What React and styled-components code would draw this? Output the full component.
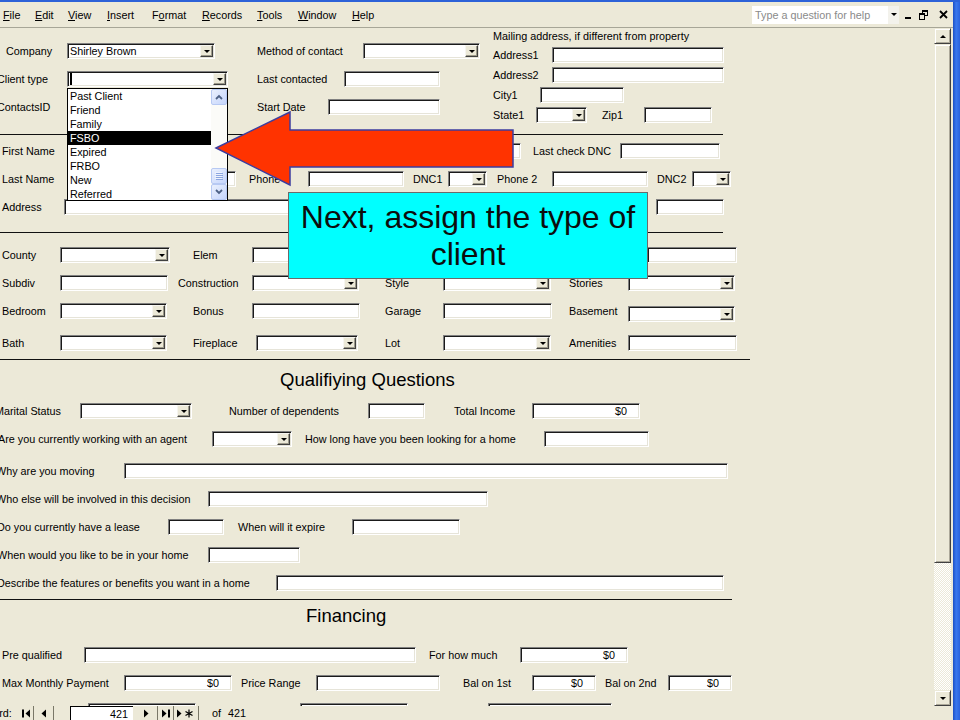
import React from 'react'
import styled, { createGlobalStyle } from 'styled-components'

const BEIGE = '#ece9d8'

const GlobalStyle = createGlobalStyle`
  * { box-sizing: border-box; }
  html, body { margin: 0; padding: 0; background: ${BEIGE}; }
  body {
    font-family: 'Liberation Sans', Arial, sans-serif;
    font-size: 10.8px;
    color: #000;
  }
`

const Window = styled.div`
  position: relative;
  width: 960px;
  height: 720px;
  overflow: hidden;
  display: flex;
  flex-direction: column;
  background: ${BEIGE};
`

const TopEdge = styled.div`
  flex: none;
  height: 2px;
  background: #2d62d8;
`

const Body = styled.div`
  flex: 1;
  display: flex;
  min-height: 0;
`

const Inner = styled.div`
  flex: 1;
  display: flex;
  flex-direction: column;
  min-width: 0;
`

const RightFrame = styled.div`
  flex: none;
  width: 7px;
  background: linear-gradient(90deg, #1b4fc4 0, #3a78ee 45%, #2a62dc 100%);
`

/* ---------- menu bar ---------- */

const MenuBar = styled.div`
  flex: none;
  height: 26px;
  display: flex;
  align-items: center;
  white-space: nowrap;
  border-bottom: 1px solid #a7a697;
`

const MenuItem = styled.span`
  flex: none;
  width: ${(p) => (p.$w ? `${p.$w}px` : 'auto')};
  margin-left: ${(p) => p.$ml || 0}px;
`

const HelpBox = styled.div`
  flex: none;
  margin-left: auto;
  width: 147px;
  height: 18px;
  display: flex;
  align-items: center;
  background: #fff;
`

const HelpText = styled.span`
  flex: 1;
  padding-left: 3px;
  color: #8a8a8a;
`

const HelpArrow = styled.span`
  flex: none;
  width: 11px;
  height: 100%;
  display: flex;
  align-items: center;
  justify-content: center;
  background: #f3f2ec;
`

const Tri = styled.span`
  width: 0;
  height: 0;
  border-left: 3px solid transparent;
  border-right: 3px solid transparent;
  ${(p) => (p.$up ? 'border-bottom: 3px solid #000;' : 'border-top: 3px solid #000;')}
`

const Controls = styled.div`
  flex: none;
  width: 54px;
  height: 25px;
  display: flex;
  align-items: center;
`

const CtlIcon = styled.svg`
  flex: none;
  margin-left: ${(p) => p.$ml}px;
`

/* ---------- form ---------- */

const Content = styled.div`
  flex: 1;
  display: flex;
  min-height: 0;
`

const Form = styled.div`
  flex: 1;
  min-width: 0;
  overflow: hidden;
`

const TopSection = styled.div`
  display: flex;
  height: 106px;
`

const TopLeft = styled.div`
  flex: none;
  width: 493px;
`

const TopRight = styled.div`
  flex: none;
  padding-top: 1px;
`

const MailHeader = styled.div`
  height: 14px;
  line-height: 14px;
  white-space: nowrap;
`

const Row = styled.div`
  display: flex;
  align-items: center;
  height: 16px;
  margin-top: ${(p) => p.$mt}px;
  white-space: nowrap;
`

const Label = styled.span`
  flex: none;
  width: ${(p) => p.$w}px;
  margin-left: ${(p) => p.$ml}px;
  line-height: 16px;
  white-space: nowrap;
`

const TextBox = styled.div`
  flex: none;
  display: flex;
  align-items: center;
  justify-content: ${(p) => (p.$right ? 'flex-end' : 'flex-start')};
  width: ${(p) => p.$w}px;
  height: 16px;
  margin-left: ${(p) => p.$ml}px;
  margin-top: ${(p) => (p.$drop ? 6 : 0)}px;
  padding: ${(p) => (p.$combo ? '1px 1px 1px 2px' : p.$right ? '0 12px 0 2px' : '0 2px')};
  background: #fff;
  border: 1px solid;
  border-color: #808080 #fff #fff #808080;
  box-shadow: inset 1px 1px 0 #1a1a1a, inset -1px -1px 0 #e6e4d9;
  overflow: hidden;
`

const Value = styled.span`
  white-space: nowrap;
  color: #000;
`

const Caret = styled.span`
  flex: none;
  width: 2px;
  height: 12px;
  background: #000;
`

const DropButton = styled.span`
  flex: none;
  margin-left: auto;
  width: 13px;
  height: 12px;
  display: flex;
  align-items: center;
  justify-content: center;
  background: ${BEIGE};
  border: 1px solid;
  border-color: #f6f5f0 #404040 #404040 #f6f5f0;
  box-shadow: inset -1px -1px 0 #9d9a8a;
`

const Divider = styled.div`
  width: ${(p) => p.$w}px;
  height: 1px;
  margin-top: ${(p) => p.$mt}px;
  background: #111;
`

const Heading = styled.div`
  height: ${(p) => p.$h}px;
  line-height: ${(p) => p.$h}px;
  padding-left: ${(p) => p.$x}px;
  font-size: 18.5px;
  white-space: nowrap;
`

/* ---------- vertical scroll bar ---------- */

const VScroll = styled.div`
  flex: none;
  width: 17px;
  margin-right: 2px;
  display: flex;
  flex-direction: column;
`

const ClassicBtn = styled.div`
  flex: none;
  height: ${(p) => p.$h}px;
  display: flex;
  align-items: center;
  justify-content: center;
  background: ${BEIGE};
  border: 1px solid;
  border-color: ${BEIGE} #404040 #404040 ${BEIGE};
  box-shadow: inset 1px 1px 0 #fff, inset -1px -1px 0 #aca899;
`

const Track = styled.div`
  flex: 1;
  background: repeating-conic-gradient(#fff 0 25%, ${BEIGE} 0 50%) 0 0 / 2px 2px;
`

/* ---------- record navigation ---------- */

const NavBar = styled.div`
  flex: none;
  height: 14px;
  display: flex;
  align-items: center;
  white-space: nowrap;
  overflow: hidden;
`

const NavText = styled.span`
  flex: none;
  width: ${(p) => (p.$w ? `${p.$w}px` : 'auto')};
  margin-left: ${(p) => p.$ml}px;
  word-spacing: 4px;
`

const NavButton = styled.div`
  flex: none;
  width: ${(p) => p.$w}px;
  height: 14px;
  margin-left: ${(p) => p.$ml || 0}px;
  display: flex;
  align-items: center;
  justify-content: center;
  border-right: 1px solid #7a7868;
`

const NavInput = styled.div`
  flex: none;
  width: 63px;
  height: 14px;
  margin-left: 16px;
  padding-right: 5px;
  text-align: right;
  line-height: 14px;
  background: #fff;
  border-left: 1px solid #000;
  border-top: 1px solid #000;
`

/* ---------- overlays ---------- */

const DropList = styled.div`
  position: absolute;
  left: 67px;
  top: 88px;
  width: 161px;
  height: 113px;
  display: flex;
  background: #fff;
  border: 1px solid #000;
  z-index: 2;
`

const ListItems = styled.div`
  flex: 1;
  overflow: hidden;
`

const ListItem = styled.div`
  height: 14px;
  line-height: 14px;
  padding-left: 2px;
  white-space: nowrap;
  background: ${(p) => (p.$sel ? '#000' : 'transparent')};
  color: ${(p) => (p.$sel ? '#fff' : '#000')};
`

const ListScroll = styled.div`
  flex: none;
  width: 16px;
  display: flex;
  flex-direction: column;
  background: #fbfbf8;
`

const XpBtn = styled.div`
  flex: none;
  height: 16px;
  display: flex;
  align-items: center;
  justify-content: center;
  border: 1px solid #b7c9f3;
  border-radius: 2px;
  background: linear-gradient(135deg, #eaf0fd 0, #c5d5fc 100%);
`

const XpGap = styled.div`
  flex: none;
  height: ${(p) => p.$h}px;
`

const Arrow = styled.svg`
  position: absolute;
  left: 210px;
  top: 105px;
  overflow: visible;
  pointer-events: none;
  z-index: 3;
`

const Callout = styled.div`
  position: absolute;
  left: 288px;
  top: 192px;
  width: 360px;
  height: 87px;
  padding-top: 6px;
  background: #00ffff;
  border: 1px solid #6b6b6b;
  font-family: 'Liberation Sans', Arial, sans-serif;
  font-size: 32px;
  line-height: 37px;
  text-align: center;
  color: #0d0d0d;
  z-index: 3;
`

/* ---------- data ---------- */

const menu = [
  { t: 'File', u: 0, x: 3 },
  { t: 'Edit', u: 0, x: 35 },
  { t: 'View', u: 0, x: 68 },
  { t: 'Insert', u: 0, x: 107 },
  { t: 'Format', u: 1, x: 152 },
  { t: 'Records', u: 0, x: 202 },
  { t: 'Tools', u: 0, x: 257 },
  { t: 'Window', u: 0, x: 298 },
  { t: 'Help', u: 0, x: 352 },
]

const topLeft = [
  {
    mt: 15,
    items: [
      { l: 'Company', lx: 6, x: 67, w: 148, combo: true, v: 'Shirley Brown' },
      { l: 'Method of contact', lx: 257, x: 363, w: 117, combo: true },
    ],
  },
  {
    mt: 12,
    items: [
      { l: 'Client type', lx: -3, x: 67, w: 161, combo: true, caret: true },
      { l: 'Last contacted', lx: 257, x: 344, w: 96 },
    ],
  },
  {
    mt: 12,
    items: [
      { l: 'ContactsID', lx: -3, x: 67, w: 90 },
      { l: 'Start Date', lx: 257, x: 328, w: 112 },
    ],
  },
]

const mailing = [
  { mt: 4, items: [{ l: 'Address1', lx: 493, x: 552, w: 172 }] },
  { mt: 4, items: [{ l: 'Address2', lx: 493, x: 552, w: 172 }] },
  { mt: 4, items: [{ l: 'City1', lx: 493, x: 540, w: 84 }] },
  {
    mt: 4,
    items: [
      { l: 'State1', lx: 493, x: 536, w: 51, combo: true },
      { l: 'Zip1', lx: 602, x: 644, w: 68 },
    ],
  },
]

// fields whose labels sit under the arrow or the callout keep only their boxes
const contact = [
  {
    mt: 8,
    items: [
      { l: 'First Name', lx: 2, x: 68, w: 150 },
      { x: 308, w: 213 },
      { l: 'Last check DNC', lx: 533, x: 620, w: 100 },
    ],
  },
  {
    mt: 12,
    items: [
      { l: 'Last Name', lx: 2, x: 68, w: 168 },
      { l: 'Phone', lx: 249, x: 308, w: 96 },
      { l: 'DNC1', lx: 413, x: 448, w: 39, combo: true },
      { l: 'Phone 2', lx: 497, x: 552, w: 96 },
      { l: 'DNC2', lx: 657, x: 692, w: 39, combo: true },
    ],
  },
  {
    mt: 12,
    items: [
      { l: 'Address', lx: 2, x: 64, w: 300 },
      { x: 656, w: 68 },
    ],
  },
]

const property = [
  {
    mt: 14,
    items: [
      { l: 'County', lx: 2, x: 60, w: 110, combo: true },
      { l: 'Elem', lx: 193, x: 252, w: 108 },
      { x: 647, w: 90 },
    ],
  },
  {
    mt: 12,
    items: [
      { l: 'Subdiv', lx: 2, x: 60, w: 108 },
      { l: 'Construction', lx: 178, x: 252, w: 107, combo: true },
      { l: 'Style', lx: 385, x: 443, w: 108, combo: true },
      { l: 'Stories', lx: 569, x: 628, w: 107, combo: true },
    ],
  },
  {
    mt: 12,
    items: [
      { l: 'Bedroom', lx: 2, x: 60, w: 107, combo: true },
      { l: 'Bonus', lx: 193, x: 252, w: 108 },
      { l: 'Garage', lx: 385, x: 443, w: 109 },
      { l: 'Basement', lx: 569, x: 628, w: 107, combo: true, drop: true },
    ],
  },
  {
    mt: 16,
    items: [
      { l: 'Bath', lx: 2, x: 60, w: 107, combo: true },
      { l: 'Fireplace', lx: 193, x: 256, w: 102, combo: true },
      { l: 'Lot', lx: 385, x: 443, w: 108, combo: true },
      { l: 'Amenities', lx: 569, x: 628, w: 109 },
    ],
  },
]

const questions = [
  {
    mt: 3,
    items: [
      { l: 'Marital Status', lx: -5, x: 80, w: 112, combo: true },
      { l: 'Number of dependents', lx: 229, x: 368, w: 57 },
      { l: 'Total Income', lx: 454, x: 532, w: 108, v: '$0', right: true },
    ],
  },
  {
    mt: 12,
    items: [
      { l: 'Are you currently working with an agent', lx: -2, x: 212, w: 80, combo: true },
      { l: 'How long have you been looking for a home', lx: 305, x: 544, w: 105 },
    ],
  },
  { mt: 16, items: [{ l: 'Why are you moving', lx: -4, x: 124, w: 604 }] },
  { mt: 12, items: [{ l: 'Who else will be involved in this decision', lx: -4, x: 208, w: 280 }] },
  {
    mt: 12,
    items: [
      { l: 'Do you currently have a lease', lx: -3, x: 168, w: 56 },
      { l: 'When will it expire', lx: 238, x: 352, w: 108 },
    ],
  },
  { mt: 12, items: [{ l: 'When would you like to be in your home', lx: -3, x: 208, w: 92 }] },
  { mt: 12, items: [{ l: 'Describe the features or benefits you want in a home', lx: -3, x: 276, w: 448 }] },
]

const financing = [
  {
    mt: 15,
    items: [
      { l: 'Pre qualified', lx: 2, x: 84, w: 332 },
      { l: 'For how much', lx: 429, x: 520, w: 108, v: '$0', right: true },
    ],
  },
  {
    mt: 12,
    items: [
      { l: 'Max Monthly Payment', lx: 2, x: 124, w: 108, v: '$0', right: true },
      { l: 'Price Range', lx: 241, x: 316, w: 124 },
      { l: 'Bal on 1st', lx: 463, x: 532, w: 64, v: '$0', right: true },
      { l: 'Bal on 2nd', lx: 605, x: 668, w: 64, v: '$0', right: true },
    ],
  },
  {
    mt: 12,
    items: [
      { x: 88, w: 108 },
      { x: 300, w: 108 },
      { x: 488, w: 124 },
    ],
  },
]

const clientTypes = ['Past Client', 'Friend', 'Family', 'FSBO', 'Expired', 'FRBO', 'New', 'Referred']

/* ---------- pieces ---------- */

const Fields = ({ items, origin = 0 }) => {
  let cur = origin
  const out = []
  items.forEach((it, i) => {
    if (it.l) {
      out.push(
        <Label key={`l${i}`} $ml={it.lx - cur} $w={it.x - it.lx}>
          {it.l}
        </Label>
      )
      cur = it.x
    }
    out.push(
      <TextBox
        key={`b${i}`}
        $ml={it.x - cur}
        $w={it.w}
        $right={!!it.right}
        $combo={!!it.combo}
        $drop={!!it.drop}
      >
        {it.caret && <Caret />}
        {it.v && <Value>{it.v}</Value>}
        {it.combo && (
          <DropButton>
            <Tri />
          </DropButton>
        )}
      </TextBox>
    )
    cur = it.x + it.w
  })
  return out
}

const Rows = ({ rows, origin }) =>
  rows.map((r, i) => (
    <Row key={i} $mt={r.mt}>
      <Fields items={r.items} origin={origin} />
    </Row>
  ))

const Chevron = ({ up }) => (
  <svg width="8" height="6" viewBox="0 0 8 6">
    <polyline
      points={up ? '1,5 4,2 7,5' : '1,1 4,4 7,1'}
      fill="none"
      stroke="#4d6185"
      strokeWidth="1.8"
    />
  </svg>
)

const Grip = () => (
  <svg width="8" height="8" viewBox="0 0 8 8">
    {[0, 2, 4, 6].map((y) => (
      <g key={y}>
        <rect x="0" y={y} width="7" height="1" fill="#eef3fe" />
        <rect x="1" y={y + 1} width="7" height="1" fill="#8ca6e0" />
      </g>
    ))}
  </svg>
)

const NavGlyph = ({ kind }) => (
  <svg width={kind === 'new' ? 20 : 10} height="9" viewBox={kind === 'new' ? '0 0 20 9' : '0 0 10 9'}>
    {kind === 'first' && (
      <>
        <rect x="1" y="0.5" width="2" height="8" fill="#000" />
        <polygon points="9,0.5 9,8.5 4.5,4.5" fill="#000" />
      </>
    )}
    {kind === 'prev' && <polygon points="7,0.5 7,8.5 2.5,4.5" fill="#000" />}
    {kind === 'next' && <polygon points="3,0.5 3,8.5 7.5,4.5" fill="#000" />}
    {kind === 'last' && (
      <>
        <polygon points="1,0.5 1,8.5 5.5,4.5" fill="#000" />
        <rect x="7" y="0.5" width="2" height="8" fill="#000" />
      </>
    )}
    {kind === 'new' && (
      <>
        <polygon points="1,0.5 1,8.5 5.5,4.5" fill="#000" />
        <path
          d="M13 0.5 V8.5 M9.5 2.5 L16.5 6.5 M16.5 2.5 L9.5 6.5"
          stroke="#000"
          strokeWidth="1.2"
        />
      </>
    )}
  </svg>
)

export default function App() {
  return (
    <>
      <GlobalStyle />
      <Window>
        <TopEdge />
        <Body>
          <Inner>
            <MenuBar>
              {menu.map((m, i) => {
                const next = menu[i + 1]
                return (
                  <MenuItem key={m.t} $ml={i === 0 ? m.x : 0} $w={next ? next.x - m.x : 0}>
                    {m.t.slice(0, m.u)}
                    <u>{m.t[m.u]}</u>
                    {m.t.slice(m.u + 1)}
                  </MenuItem>
                )
              })}
              <HelpBox>
                <HelpText>Type a question for help</HelpText>
                <HelpArrow>
                  <Tri />
                </HelpArrow>
              </HelpBox>
              <Controls>
                <CtlIcon $ml={5} width="8" height="10" viewBox="0 0 8 10">
                  <rect x="1" y="7" width="6" height="2" fill="#000" />
                </CtlIcon>
                <CtlIcon $ml={7} width="9" height="10" viewBox="0 0 9 10">
                  <rect x="3.5" y="0.5" width="5" height="5" fill="none" stroke="#000" />
                  <rect x="3" y="0" width="6" height="2" fill="#000" />
                  <rect x="0.5" y="3.5" width="5" height="6" fill={BEIGE} stroke="#000" />
                  <rect x="0" y="3" width="6" height="2" fill="#000" />
                </CtlIcon>
                <CtlIcon $ml={11} width="9" height="9" viewBox="0 0 9 9">
                  <path d="M1 1 L8 8 M8 1 L1 8" stroke="#000" strokeWidth="1.8" />
                </CtlIcon>
              </Controls>
            </MenuBar>

            <Content>
              <Form>
                <TopSection>
                  <TopLeft>
                    <Rows rows={topLeft} origin={0} />
                  </TopLeft>
                  <TopRight>
                    <MailHeader>Mailing address, if different from property</MailHeader>
                    <Rows rows={mailing} origin={493} />
                  </TopRight>
                </TopSection>
                <Divider $w={723} $mt={0} />
                <Rows rows={contact} origin={0} />
                <Divider $w={723} $mt={17} />
                <Rows rows={property} origin={0} />
                <Divider $w={750} $mt={8} />
                <Heading $h={40} $x={280}>
                  Qualifiying Questions
                </Heading>
                <Rows rows={questions} origin={0} />
                <Divider $w={732} $mt={8} />
                <Heading $h={32} $x={306}>
                  Financing
                </Heading>
                <Rows rows={financing} origin={0} />
              </Form>

              <VScroll>
                <ClassicBtn $h={16}>
                  <Tri $up />
                </ClassicBtn>
                <ClassicBtn $h={519} />
                <Track />
                <ClassicBtn $h={16}>
                  <Tri />
                </ClassicBtn>
              </VScroll>
            </Content>

            <NavBar>
              <NavText $ml={-26} $w={38}>
                Record:
              </NavText>
              <NavButton $w={16} $ml={6}>
                <NavGlyph kind="first" />
              </NavButton>
              <NavButton $w={20}>
                <NavGlyph kind="prev" />
              </NavButton>
              <NavInput>421</NavInput>
              <NavButton $w={24} $ml={1}>
                <NavGlyph kind="next" />
              </NavButton>
              <NavButton $w={16}>
                <NavGlyph kind="last" />
              </NavButton>
              <NavButton $w={25}>
                <NavGlyph kind="new" />
              </NavButton>
              <NavText $ml={13}>of 421</NavText>
            </NavBar>
          </Inner>
          <RightFrame />
        </Body>

        <DropList>
          <ListItems>
            {clientTypes.map((c) => (
              <ListItem key={c} $sel={c === 'FSBO'}>
                {c}
              </ListItem>
            ))}
          </ListItems>
          <ListScroll>
            <XpBtn>
              <Chevron up />
            </XpBtn>
            <XpGap $h={63} />
            <XpBtn>
              <Grip />
            </XpBtn>
            <XpBtn>
              <Chevron />
            </XpBtn>
          </ListScroll>
        </DropList>

        <Arrow width="310" height="86" viewBox="0 0 310 86">
          <polygon
            points="6,43 80,7 80,25 303,25 303,62 80,62 80,80"
            fill="#ff3300"
            stroke="#3d3d9e"
            strokeWidth="1.5"
            strokeLinejoin="miter"
          />
        </Arrow>

        <Callout>Next, assign the type of client</Callout>
      </Window>
    </>
  )
}
